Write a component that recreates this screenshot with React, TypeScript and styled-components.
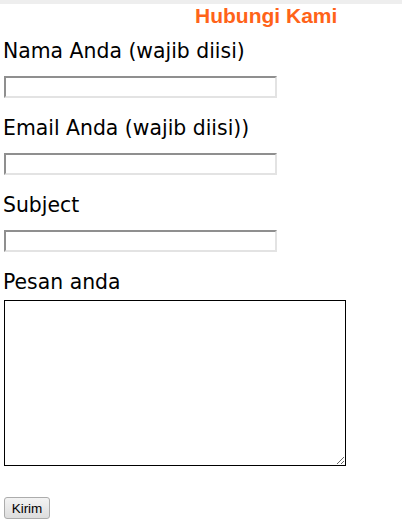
import React from 'react'
import styled, { createGlobalStyle } from 'styled-components'

const GlobalStyle = createGlobalStyle`
    html, body {
        margin: 0;
        padding: 0;
        background: #ffffff;
    }
`

const Page = styled.div`
    display: flex;
    flex-direction: column;
    width: 402px;
    min-height: 527px;
    background: #ffffff;
`

const TopBar = styled.div`
    height: 4px;
    background: #eeeeee;
`

const Title = styled.h2`
    margin: 0 0 0 195px;
    height: 24px;
    font-family: 'Liberation Sans', Arial, sans-serif;
    font-size: 21px;
    line-height: 24px;
    font-weight: bold;
    color: #ff6319;
`

const Form = styled.form`
    display: flex;
    flex-direction: column;
    padding: 0 0 0 4px;
`

const Field = styled.div<{ $top: number }>`
    display: flex;
    flex-direction: column;
    align-items: flex-start;
    margin-top: ${p => p.$top}px;
`

const Label = styled.label<{ $gap: number }>`
    display: block;
    height: 30px;
    margin: 0 0 ${p => p.$gap}px -1px;
    font-family: 'DejaVu Sans', 'Open Sans', sans-serif;
    font-size: 20.4px;
    line-height: 30px;
    color: #000000;
    white-space: nowrap;
`

const TextInput = styled.input`
    box-sizing: border-box;
    width: 273px;
    height: 22px;
    margin: 0;
    padding: 0 2px;
    border-style: solid;
    border-width: 2px;
    border-color: #8f8f8f #e3e3e3 #e3e3e3 #8f8f8f;
    background: #ffffff;
    outline: none;
`

const MessageBox = styled.textarea`
    box-sizing: border-box;
    width: 342px;
    height: 166px;
    margin: 0;
    padding: 2px;
    border: 1px solid #000000;
    background: #ffffff;
    resize: both;
    outline: none;
`

const SubmitButton = styled.button`
    box-sizing: border-box;
    width: 46px;
    height: 22px;
    margin-top: 31px;
    padding: 0;
    border: 1px solid #acacac;
    border-radius: 3px;
    background: linear-gradient(#f3f3f3, #dddddd);
    font-family: 'Liberation Sans', Arial, sans-serif;
    font-size: 13.5px;
    color: #000000;
`

const fields = [
    { name: 'nama', label: 'Nama Anda (wajib diisi)', top: 8 },
    { name: 'email', label: 'Email Anda (wajib diisi))', top: 15 },
    { name: 'subject', label: 'Subject', top: 15 },
]

export default function App() {
    return (
        <>
            <GlobalStyle />
            <Page>
                <TopBar />
                <Title>Hubungi Kami</Title>
                <Form onSubmit={e => e.preventDefault()}>
                    {fields.map(f => (
                        <Field key={f.name} $top={f.top}>
                            <Label htmlFor={f.name} $gap={10}>{f.label}</Label>
                            <TextInput id={f.name} name={f.name} type="text" />
                        </Field>
                    ))}
                    <Field $top={15}>
                        <Label htmlFor="pesan" $gap={3}>Pesan anda</Label>
                        <MessageBox id="pesan" name="pesan" />
                    </Field>
                    <div>
                        <SubmitButton type="submit">Kirim</SubmitButton>
                    </div>
                </Form>
            </Page>
        </>
    )
}
